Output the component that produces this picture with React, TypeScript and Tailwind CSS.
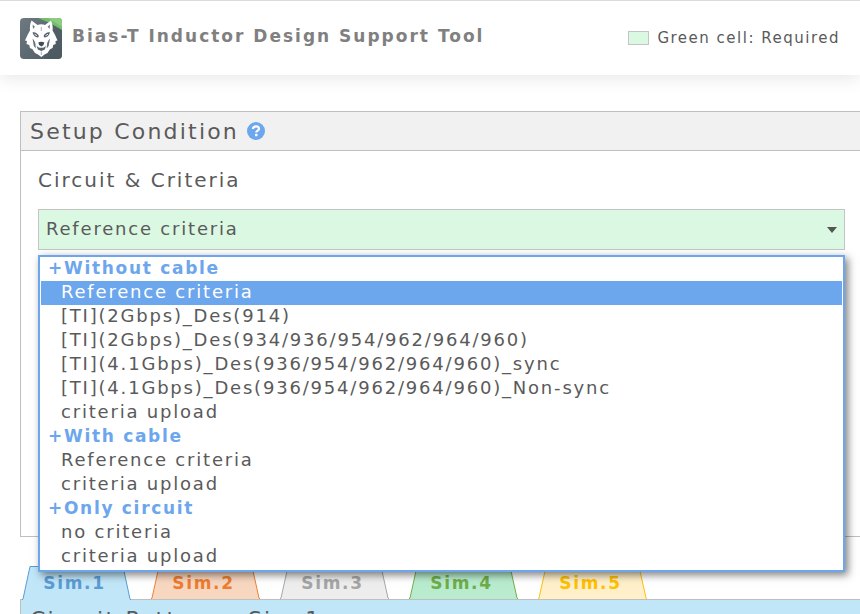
import { useState } from 'react';
import clsx from 'clsx';

const groups = [
  {
    label: '+Without cable',
    options: [
      'Reference criteria',
      '[TI](2Gbps)_Des(914)',
      '[TI](2Gbps)_Des(934/936/954/962/964/960)',
      '[TI](4.1Gbps)_Des(936/954/962/964/960)_sync',
      '[TI](4.1Gbps)_Des(936/954/962/964/960)_Non-sync',
      'criteria upload',
    ],
  },
  { label: '+With cable', options: ['Reference criteria', 'criteria upload'] },
  { label: '+Only circuit', options: ['no criteria', 'criteria upload'] },
];

const tabs = [
  { name: 'Sim.1', text: 'text-[#5b9bd5]', shape: 'fill-[#c0e6f8] stroke-[#5b9bd5]' },
  { name: 'Sim.2', text: 'text-[#ed7d31]', shape: 'fill-[#f8d7c1] stroke-[#ed7d31]' },
  { name: 'Sim.3', text: 'text-[#a5a5a5]', shape: 'fill-[#ededed] stroke-[#a5a5a5]' },
  { name: 'Sim.4', text: 'text-[#70ad47]', shape: 'fill-[#b9eccf] stroke-[#70ad47]' },
  { name: 'Sim.5', text: 'text-[#ffc000]', shape: 'fill-[#fff0cb] stroke-[#ffc000]' },
];

function WolfLogo() {
  return (
    <svg viewBox="0 0 42 41" className="h-[41px] w-[42px]" aria-hidden="true">
      <defs>
        <linearGradient id="slate" x1="0" y1="0" x2="1" y2="1">
          <stop offset="0" stopColor="#6d7a80" />
          <stop offset="1" stopColor="#4d5a62" />
        </linearGradient>
        <clipPath id="badge">
          <rect width="42" height="41" rx="4" />
        </clipPath>
      </defs>
      <g clipPath="url(#badge)">
        <rect width="42" height="41" fill="url(#slate)" />
        <path d="M30 5 42 12v29H24z" fill="#4b5860" opacity=".6" />
        <path d="M18 0h24v12L30 5z" fill="#74bd6c" />
        <path d="M28 0h14v9z" fill="#8ccb80" />
        {/* head */}
        <path
          d="M11.500 2.500 17.500 7C20 6 23 6 25 7l6-4.500c1.500 3.500 2 6.500 1.600 10l2.500 4.500 2.400 5.500-2 .6.200 3-2.500.8-.6 3-2.600 1.400-2.500 3.700-3 1.500L21.300 39 18 36.500 15 35l-2.500-3.700-2.600-1.400-.6-3-2.800-.8.500-3-2-.6 2.500-5.500 2.500-4.500c-.4-3.500 0-6.500 1.500-10z"
          fill="#fff"
        />
        {/* ears */}
        <path d="M12.600 6.500 15 8.800l-2 2.200zM30 6.500 27.600 8.800l2 2.200z" fill="#727f85" />
        {/* brows and eyes */}
        <path d="M12.500 14.500c2-.8 5 .5 6.300 3.200l-.3 1.600c-2.500.5-4.700-1-6-4.800zM30 14.500c-2-.8-5 .5-6.300 3.200l.3 1.600c2.500.5 4.700-1 6-4.800z" fill="#55626a" />
        <path d="m14.500 16.200 2.500 1.500M28 16.200l-2.500 1.500" stroke="#fff" strokeWidth=".9" />
        {/* cheek lines */}
        <path d="M12.500 20.500c1.500 2 2.500 3 3 5.500l.3 4.500-2-2.500zM30 20.500c-1.500 2-2.500 3-3 5.500l-.3 4.500 2-2.500z" fill="#66737a" />
        {/* muzzle */}
        <path d="M18.300 24.500c2-1 4-1 6 0l-.8 2.600-2.200 1.400-2.200-1.400z" fill="#3f4c54" />
        <path d="M16.500 27.500c1.500 2 3 2.300 4.800 2.300s3.300-.3 4.800-2.300l-1.300 4-3.500 1.500-3.500-1.500z" fill="#58656c" />
        <path d="M21.300 33.500V37M21.300 9v4" stroke="#8f9aa0" strokeWidth=".8" />
      </g>
    </svg>
  );
}

function HelpIcon() {
  return (
    <svg viewBox="0 0 18 18" className="size-[18px]" aria-hidden="true">
      <circle cx="9" cy="9" r="9" fill="#6ca6ec" />
      <path d="M5.900 7C6.100 5 7.400 4.300 9 4.300c1.800 0 3 .9 3 2.400 0 2-2.700 1.900-2.700 3.800" fill="none" stroke="#fff" strokeWidth="2.200" />
      <rect x="8" y="11.800" width="2.500" height="2.500" rx=".6" fill="#fff" />
    </svg>
  );
}

export default function App() {
  const [selected, setSelected] = useState('0-0');
  const [activeTab, setActiveTab] = useState('Sim.1');

  return (
    <div className="h-screen overflow-hidden bg-white font-['Verdana','DejaVu_Sans',sans-serif] text-[#5a5a5a]">
      <header className="flex h-[75px] items-center justify-between border-t border-[#d9d9de] px-5 shadow-[0_4px_16px_rgba(0,0,0,0.09)]">
        <div className="flex items-center gap-2.5">
          <WolfLogo />
          <h1 className="pb-0.5 text-[17px] font-bold tracking-[2px] text-[#808080]">
            Bias-T Inductor Design Support Tool
          </h1>
        </div>
        <div className="flex items-center gap-2 text-[15px] tracking-widest">
          <span className="h-3.5 w-[21px] border border-[#c4c4c4] bg-[#daf8e2]" />
          Green cell: Required
        </div>
      </header>

      <main className="pt-9 pl-5">
        <section className="h-[426px] border border-r-0 border-[#bfbfbf]">
          <div className="flex h-[39px] items-center gap-2 border-b border-[#bfbfbf] bg-[#f1f1f1] px-[9px]">
            <h2 className="text-[22px] tracking-widest">Setup Condition</h2>
            <button type="button" aria-label="Help">
              <HelpIcon />
            </button>
          </div>

          <div className="pt-3.5 pr-[15px] pl-[17px]">
            <label htmlFor="criteria" className="block text-xl leading-[30px] tracking-widest">
              Circuit &amp; Criteria
            </label>
            <div className="relative mt-3.5">
              <select
                id="criteria"
                value={selected}
                onChange={(e) => setSelected(e.target.value)}
                className="h-[41px] w-full appearance-none border border-[#c4c4c4] bg-[#daf8e2] px-[7px] pb-0.5 text-lg tracking-widest outline-none"
              >
                {groups.map((group, g) => (
                  <optgroup key={group.label} label={group.label}>
                    {group.options.map((option, o) => (
                      <option key={option} value={`${g}-${o}`}>
                        {option}
                      </option>
                    ))}
                  </optgroup>
                ))}
              </select>
              <svg viewBox="0 0 10 6" className="pointer-events-none absolute top-[18px] right-2 h-1.5 w-2.5" aria-hidden="true">
                <path d="M0 0h10L5 6z" fill="#555" />
              </svg>

              <div
                role="listbox"
                aria-label="Circuit & Criteria"
                className="absolute top-[46px] right-0 left-0 z-10 border-2 border-[#6ca6ec] bg-white px-px pb-px text-lg shadow-[3px_3px_8px_rgba(0,0,0,0.5)]"
              >
                {groups.map((group, g) => (
                  <div key={group.label} role="group" aria-label={group.label}>
                    <div className="h-6 pl-[7px] text-[17px] leading-[22px] font-bold tracking-widest text-[#6ca6ec]">
                      {group.label}
                    </div>
                    {group.options.map((option, o) => (
                      <button
                        key={option}
                        type="button"
                        role="option"
                        aria-selected={selected === `${g}-${o}`}
                        onClick={() => setSelected(`${g}-${o}`)}
                        className={clsx(
                          'block h-6 w-full pb-0.5 pl-5 text-left leading-[22px] tracking-widest',
                          selected === `${g}-${o}` && 'bg-[#6ca6ec] text-white'
                        )}
                      >
                        {option}
                      </button>
                    ))}
                  </div>
                ))}
              </div>
            </div>
          </div>
        </section>

        <div role="tablist" className="relative mt-[29px] -mb-px flex items-start gap-5 pl-0.5">
          {tabs.map((tab) => (
            <button
              key={tab.name}
              type="button"
              role="tab"
              aria-selected={activeTab === tab.name}
              onClick={() => setActiveTab(tab.name)}
              className={clsx(
                'relative w-[109px] pt-0.5 pr-1 text-[17px] font-bold tracking-widest',
                activeTab === tab.name ? 'h-[34px]' : 'h-[33px]',
                tab.text
              )}
            >
              <svg viewBox="0 0 109 34" preserveAspectRatio="none" className="absolute inset-0 size-full" aria-hidden="true">
                <path d="M0 34 1 33 8 .5h93L108 33l1 1" className={tab.shape} />
              </svg>
              <span className="relative">{tab.name}</span>
            </button>
          ))}
        </div>
        <section className="border-t border-l border-[#bfbfbf] bg-[#c0e6f8] px-[9px] pb-4">
          <h3 className="text-[22px] leading-10 tracking-widest">Circuit Pattern : {activeTab}</h3>
        </section>
      </main>
    </div>
  );
}
